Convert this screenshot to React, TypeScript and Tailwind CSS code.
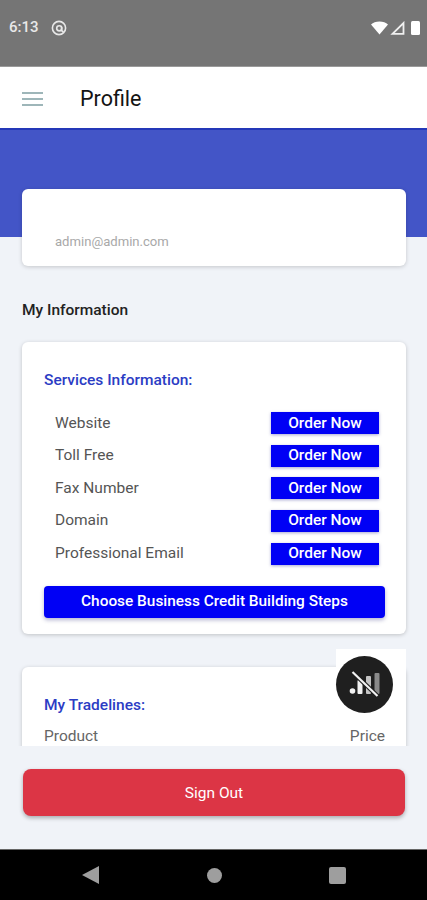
const services = ['Website', 'Toll Free', 'Fax Number', 'Domain', 'Professional Email'];

function StatusBar() {
  return (
    <div className="h-[67px] bg-[#757575] border-b border-[#9a9a9a] flex items-center justify-between pl-[9px] pr-[7px] pb-[11px] text-white shrink-0">
      <div className="flex items-center gap-[12px]">
        <span className="text-[15px] font-medium text-[#e8e8e8]">6:13</span>
        <svg width="16" height="16" viewBox="0 0 16 16" fill="none" stroke="#e8e8e8" strokeWidth="1.6">
          <circle cx="8" cy="8" r="6.6" />
          <circle cx="8.3" cy="8.3" r="2.6" />
          <path d="M10.5 7v3.5l2 1.5" />
        </svg>
      </div>
      <div className="flex items-center gap-[2px]">
        <svg width="17" height="14" viewBox="0 0 17 14" fill="#fff">
          <path d="M0 3.5C2 1.6 5 .5 8.5.5s6.5 1.1 8.5 3L8.5 13.5z" />
        </svg>
        <svg width="15" height="14" viewBox="0 0 15 14" fill="none" stroke="#f0f0f0" strokeWidth="1.8">
          <path d="M13.5 2v10.8H2.5z" />
        </svg>
        <div className="w-[9px] h-[14px] ml-[4px] bg-white rounded-[1.5px]" />
      </div>
    </div>
  );
}

function ServiceRow({ label }: { label: string }) {
  return (
    <div className="h-[32.6px] flex items-center justify-between pl-[11px] pr-[6px]">
      <span className="text-[15.5px] text-[#555]">{label}</span>
      <button className="w-[108px] h-[22px] bg-[#0000f5] text-white text-[15.5px] font-medium shadow-[0_1px_3px_rgba(0,0,120,0.35)] leading-none">
        Order Now
      </button>
    </div>
  );
}

export default function App() {
  return (
    <div className="h-[900px] w-full flex flex-col overflow-hidden bg-[#f0f3f8] font-['Roboto',sans-serif]">
      <StatusBar />

      <header className="h-[63px] bg-white border-b-2 border-[#2438b8] flex items-center pt-[3px] shrink-0">
        <svg width="21" height="14" viewBox="0 0 21 14" fill="none" stroke="#7f9ea3" strokeWidth="1.7" className="ml-[22px]">
          <path d="M0 1h21M0 7h21M0 13h21" />
        </svg>
        <h1 className="ml-[37px] mt-[1px] text-[21.5px] text-[#141414]">Profile</h1>
      </header>

      <main className="relative flex-1 overflow-hidden">
        <div className="h-[107px] bg-[#4355c7]" />

        <div className="-mt-[48px] pl-[22px] pr-[21px]">
          <section className="h-[77px] bg-white rounded-[6px] shadow-[0_1px_4px_rgba(0,0,0,0.18)] pl-[33px] pt-[44px]">
            <p className="text-[13.1px] leading-[17px] text-[#a8a8a8]">admin@admin.com</p>
          </section>

          <h2 className="mt-[34px] text-[15.5px] leading-[20px] font-medium text-[#222]">My Information</h2>

          <section className="mt-[22px] h-[292px] bg-white rounded-[6px] shadow-[0_1px_4px_rgba(0,0,0,0.2)] pl-[22px] pr-[21px] pt-[28px]">
            <h3 className="text-[15.5px] leading-[20px] font-medium text-[#2b3cc4]">Services Information:</h3>
            <div className="mt-[17px]">
              {services.map((s) => (
                <ServiceRow key={s} label={s} />
              ))}
            </div>
            <button className="mt-[16px] w-full h-[32px] bg-[#0000f5] rounded-[4px] text-white text-[15.4px] font-medium shadow-[0_2px_4px_rgba(0,0,100,0.3)]">
              Choose Business Credit Building Steps
            </button>
          </section>

          <section className="mt-[33px] h-[140px] bg-white rounded-[6px] shadow-[0_1px_4px_rgba(0,0,0,0.2)] pl-[22px] pr-[21px] pt-[28px]">
            <h3 className="text-[15.5px] leading-[20px] font-medium text-[#2b3cc4]">My Tradelines:</h3>
            <div className="mt-[11px] flex justify-between text-[15.5px] leading-[20px] text-[#666]">
              <span>Product</span>
              <span>Price</span>
            </div>
          </section>
        </div>

        {/* floating network badge */}
        <div className="absolute left-[336px] top-[519px] w-[70px] h-[66px] bg-white">
          <div className="w-[57px] h-[57px] mt-[7px] rounded-full bg-[#1f1f1f] flex items-center justify-center">
            <svg width="34" height="34" viewBox="0 0 34 34">
              <circle cx="4.5" cy="23" r="2.8" fill="#f2f2f2" />
              <rect x="9.5" y="12" width="5" height="14" rx="1" fill="#f2f2f2" />
              <rect x="18" y="8" width="5" height="18" rx="1" fill="#c4c4c4" />
              <rect x="26.5" y="5" width="5" height="21" rx="1" fill="#8a8a8a" />
              <path d="M4.5 4l25 24" stroke="#1f1f1f" strokeWidth="4.5" />
              <path d="M4.5 4l25 24" stroke="#f2f2f2" strokeWidth="2.2" />
            </svg>
          </div>
        </div>
      </main>

      <div className="h-[103px] bg-[#f0f3f8] pl-[23px] pt-[23px] shrink-0">
        <button className="w-[382px] h-[47px] pt-[2px] bg-[#dc3545] rounded-[8px] text-white text-[15.5px] shadow-[0_2px_4px_rgba(0,0,0,0.3)]">
          Sign Out
        </button>
      </div>

      <nav className="h-[51px] bg-black border-t border-[#666] flex items-center shrink-0 pl-[82px] gap-[107px]">
        <svg width="17" height="18" viewBox="0 0 17 18" fill="#9e9e9e"><path d="M17 0v18L0 9z" /></svg>
        <div className="w-[15px] h-[15px] rounded-full bg-[#9e9e9e] ml-[1px]" />
        <div className="w-[17px] h-[17px] rounded-[2px] bg-[#9e9e9e]" />
      </nav>
    </div>
  );
}
